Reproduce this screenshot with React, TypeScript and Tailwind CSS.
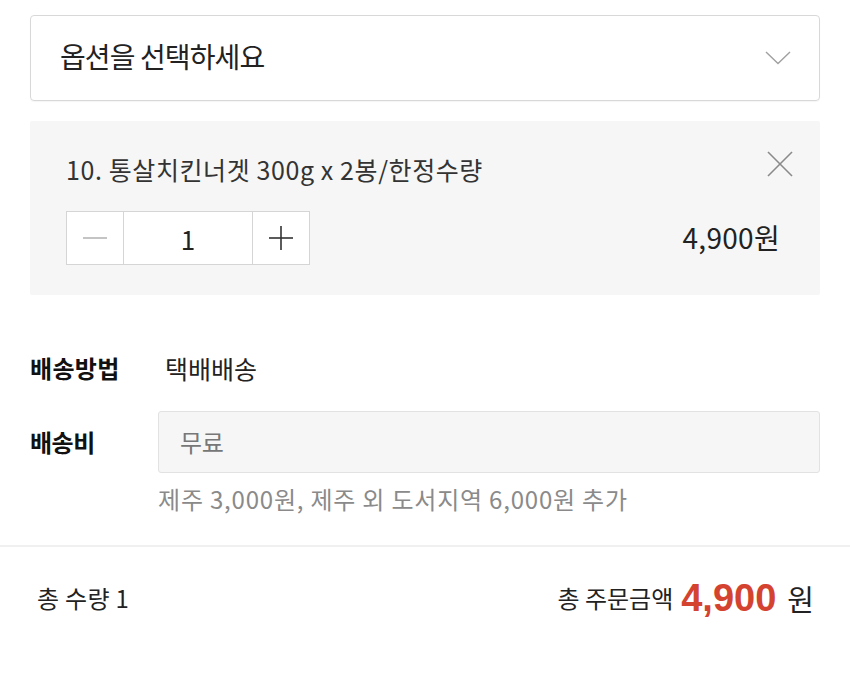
import React from "react";

export default function App() {
  return (
    <div className="w-[850px] h-[683px] bg-white text-[#222] font-['Noto_Sans_CJK_KR','Noto_Sans',sans-serif]">
      <div className="px-[30px] pt-[15px]">
        {/* select */}
        <div className="h-[86px] border border-[#d8d8d8] rounded-[4px] flex items-center justify-between pl-[29px] pr-[28px] shadow-[0_1px_1px_rgba(0,0,0,0.04)]">
          <span className="text-[28px] leading-[32px] tracking-[-0.9px] text-[#222] -mt-[4px]">옵션을 선택하세요</span>
          <svg width="26" height="14" viewBox="0 0 26 14" fill="none">
            <polyline points="1,1 13,12.5 25,1" stroke="#a0a0a0" strokeWidth="1.4" />
          </svg>
        </div>

        {/* selected option */}
        <div className="mt-[20px] h-[174px] bg-[#f6f6f6] rounded-[2px] pl-[36px] pr-[26px] pt-[32px]">
          <div className="flex items-start justify-between">
            <span className="text-[25px] leading-[32px] tracking-[0.6px] text-[#333]">10. 통살치킨너겟 300g x 2봉/한정수량</span>
            <svg className="-mt-[3px]" width="28" height="28" viewBox="0 0 28 28" fill="none">
              <line x1="2" y1="2" x2="26" y2="26" stroke="#8a8a8a" strokeWidth="1.6" />
              <line x1="26" y1="2" x2="2" y2="26" stroke="#8a8a8a" strokeWidth="1.6" />
            </svg>
          </div>
          <div className="mt-[26px] flex items-center justify-between pr-[14px]">
            <div className="flex h-[54px] border border-[#d5d5d5] bg-white">
              <div className="w-[57px] flex items-center justify-center border-r border-[#d5d5d5]">
                <div className="w-[24px] h-[1.5px] bg-[#c4c4c4]" />
              </div>
              <div className="w-[128px] flex items-center justify-center text-[26px] text-[#222]">1</div>
              <div className="w-[57px] flex items-center justify-center border-l border-[#d5d5d5]">
                <svg width="26" height="26" viewBox="0 0 26 26" fill="none">
                  <line x1="1" y1="13" x2="25" y2="13" stroke="#333" strokeWidth="1.6" />
                  <line x1="13" y1="1" x2="13" y2="25" stroke="#333" strokeWidth="1.6" />
                </svg>
              </div>
            </div>
            <span className="text-[28px] leading-[32px] tracking-[0.3px] text-[#222] -mt-[3px]">4,900원</span>
          </div>
        </div>

        {/* shipping */}
        <div className="mt-[57px] flex items-center">
          <span className="w-[135px] text-[24px] leading-[32px] font-bold tracking-[0.3px] text-[#111]">배송방법</span>
          <span className="text-[25px] leading-[32px] tracking-[0px] text-[#222]">택배배송</span>
        </div>
        <div className="mt-[27px] flex items-center">
          <span className="w-[128px] text-[24px] leading-[32px] font-bold tracking-[-0.5px] text-[#111]">배송비</span>
          <div className="flex-1 h-[62px] bg-[#f6f6f6] border border-[#e2e2e2] rounded-[3px] flex items-center pl-[21px]">
            <span className="text-[24px] tracking-[-0.3px] text-[#777]">무료</span>
          </div>
        </div>
        <div className="mt-[11px] pl-[128px] text-[24px] leading-[30px] tracking-[0.8px] text-[#8a8a8a]">
          제주 3,000원, 제주 외 도서지역 6,000원 추가
        </div>
      </div>

      <div className="mt-[31px] h-[2px] bg-[#f0f0f0]" />

      <div className="flex items-center justify-between pl-[37px] pr-[36px] mt-[31px]">
        <span className="text-[24px] leading-[32px] tracking-[0.3px] text-[#222]">총 수량 1</span>
        <div className="flex items-center">
          <span className="text-[24px] leading-[32px] tracking-[0px] text-[#222]">총 주문금액</span>
          <span className="ml-[8px] text-[38px] leading-[40px] font-bold text-[#d4432f] font-['Liberation_Sans',sans-serif]">4,900</span>
          <span className="ml-[11px] text-[29px] leading-[40px] text-[#222]">원</span>
        </div>
      </div>
    </div>
  );
}
